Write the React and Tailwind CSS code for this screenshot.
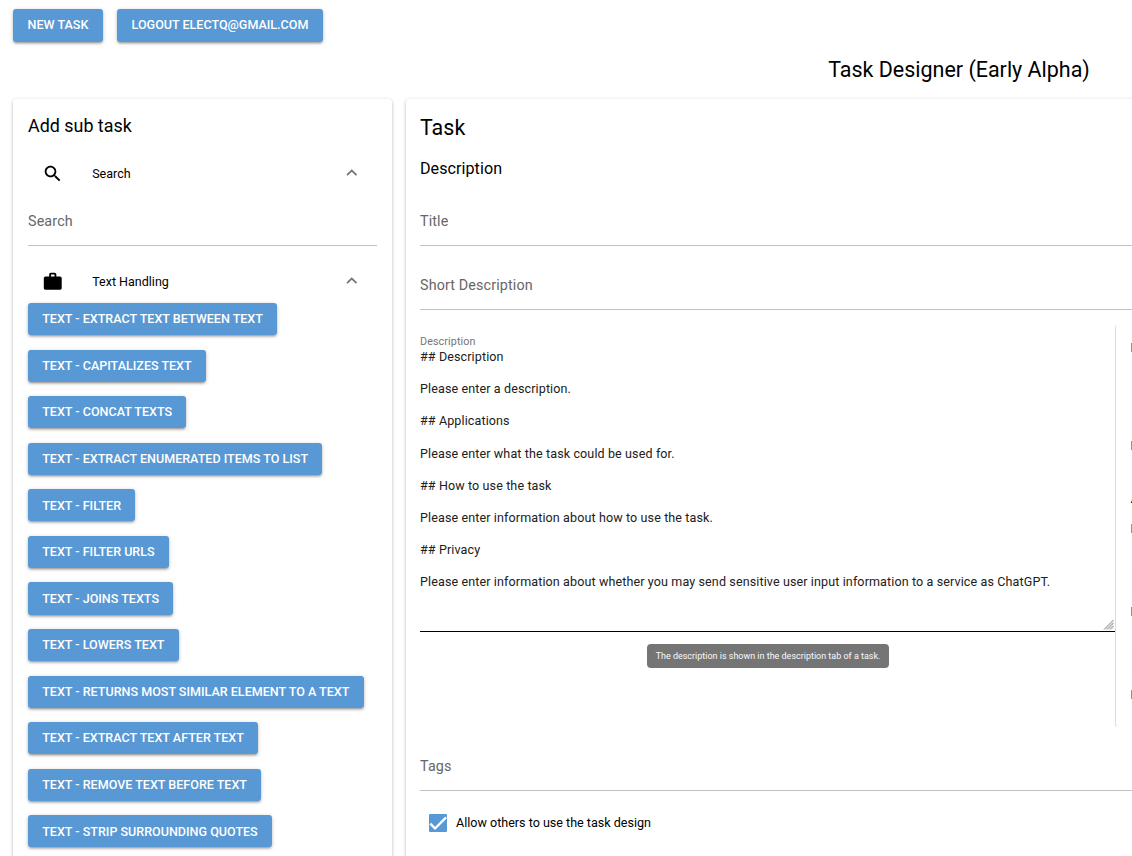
const SUB_TASKS = [
  'Text - Extract text between text',
  'Text - Capitalizes text',
  'Text - Concat texts',
  'Text - Extract enumerated items to list',
  'Text - Filter',
  'Text - Filter URLs',
  'Text - Joins texts',
  'Text - Lowers text',
  'Text - Returns most similar element to a text',
  'Text - Extract text after text',
  'Text - Remove text before text',
  'Text - Strip surrounding quotes',
];

const DESCRIPTION = `## Description

Please enter a description.

## Applications

Please enter what the task could be used for.

## How to use the task

Please enter information about how to use the task.

## Privacy

Please enter information about whether you may send sensitive user input information to a service as ChatGPT.`;

const PREVIEW = [
  ['Applications', 'Please enter what the task could be used for.'],
  ['How to use the task', 'Please enter information about how to use the task.'],
  ['Privacy', 'Please enter information about whether you may send sensitive user input.'],
];

function Button({ className = 'h-[32.22px]', children }) {
  return (
    <button
      className={`shrink-0 whitespace-nowrap rounded-[3px] bg-[#5898d4] px-[14.2px] text-[12.56px] font-medium uppercase leading-[21.6px] text-white shadow-[0_1px_4px_rgba(0,0,0,0.2),0_2px_2px_rgba(0,0,0,0.14),0_3px_1px_-2px_rgba(0,0,0,0.12)] ${className}`}
    >
      {children}
    </button>
  );
}

function Card({ className, children }) {
  return (
    <section
      className={`rounded-[4px] bg-white shadow-[0_1px_4px_rgba(0,0,0,0.2),0_2px_2px_rgba(0,0,0,0.14),0_3px_1px_-2px_rgba(0,0,0,0.12)] ${className}`}
    >
      {children}
    </section>
  );
}

function ExpansionHeader({ className, path, label }) {
  return (
    <div className={`flex items-center pl-[14.4px] pr-[15px] ${className}`}>
      <svg viewBox="0 0 24 24" className="h-[21.5px] w-[21.5px] fill-black">
        <path d={path} />
      </svg>
      <span className="ml-[28.3px] flex-1 pt-[1.2px] text-[12.53px]">{label}</span>
      <svg viewBox="0 0 24 24" className="mb-[2px] h-[21.5px] w-[21.5px] fill-[#757575]">
        <path d="M12 8l-6 6 1.41 1.41L12 10.83l4.59 4.58L18 14z" />
      </svg>
    </div>
  );
}

function Field({ label }) {
  return (
    <div className="flex h-[50px] items-center border-b border-[#c2c2c2] pt-[2px] text-[14.32px] tracking-[0.00937em] text-[#666]">
      {label}
    </div>
  );
}

export default function App() {
  return (
    <div className="h-[856px] w-full overflow-hidden bg-white font-[Roboto,sans-serif] text-black">
      <div className="flex w-[1918px] flex-col px-[13px] pt-[9px]">
        <div className="flex h-[33px] gap-[14px]">
          <Button className="h-[33px] w-[90px] pb-[2px]">New Task</Button>
          <Button className="h-[33px] w-[206px] pb-[2px]">Logout electq@gmail.com</Button>
        </div>
        <h1 className="mt-[13px] h-[30px] text-center text-[21.48px] leading-[30px]">Task Designer (Early Alpha)</h1>

        <div className="mt-[14px] flex gap-[14px]">
          <Card className="h-[900px] w-[379px] shrink-0 px-[15px] pt-[14px]">
            <h2 className="h-[26px] text-[17.9px] leading-[26px]">Add sub task</h2>
            <div className="mt-[13px]">
              <ExpansionHeader
                className="h-[44px]"
                label="Search"
                path="M15.5 14h-.79l-.28-.27C15.41 12.59 16 11.11 16 9.5 16 5.91 13.09 3 9.5 3S3 5.91 3 9.5 5.91 16 9.5 16c1.61 0 3.09-.59 4.23-1.57l.27.28v.79l5 4.99L20.49 19l-4.99-5zm-6 0C7.01 14 5 11.99 5 9.5S7.01 5 9.5 5 14 7.01 14 9.5 11.99 14 9.5 14z"
              />
            </div>
            <Field label="Search" />
            <div className="mt-[14px]">
              <ExpansionHeader
                className="h-[43px] pt-[0.6px]"
                label="Text Handling"
                path="M20 6h-4V4c0-1.11-.89-2-2-2h-4c-1.11 0-2 .89-2 2v2H4c-1.11 0-1.99.89-1.99 2L2 19c0 1.11.89 2 2 2h16c1.11 0 2-.89 2-2V8c0-1.11-.89-2-2-2zm-6 0h-4V4h4v2z"
              />
            </div>
            <div className="flex flex-col items-start gap-[14.35px]">
              {SUB_TASKS.map((task) => (
                <Button key={task}>{task}</Button>
              ))}
            </div>
          </Card>

          <Card className="h-[900px] flex-1 pl-[14px] pr-[14px] pt-[14px]">
            <h2 className="h-[30px] text-[21.48px] leading-[30px]">Task</h2>
            <h3 className="mt-[14px] h-[24px] text-[16.11px] leading-[24px] tracking-[0.003em]">Description</h3>
            <div className="mt-[15px] flex flex-col gap-[14px]">
              <Field label="Title" />
              <Field label="Short Description" />
            </div>

            <div className="mt-[15px] flex h-[402px]">
              <div className="relative w-[695px] shrink-0">
                <div className="flex h-[307px] flex-col border-b border-black pt-[9.1px]">
                  <label className="text-[10.74px] leading-[15px] tracking-[0.00937em] text-[#757575]">Description</label>
                  <p className="whitespace-pre-wrap text-[12.54px] leading-[16.09px] tracking-[0.00937em] text-[#212121]">
                    {DESCRIPTION}
                  </p>
                  <svg viewBox="0 0 12 12" className="mb-px mr-px mt-auto h-[12px] w-[12px] self-end" fill="none">
                    <path d="M2 11.5L11.5 2M5 11.5L11.5 5M8 11.5L11.5 8" stroke="#808080" />
                    <path d="M3.5 11.5L11.5 3.5M6.5 11.5L11.5 6.5M9.5 11.5L11.5 9.5" stroke="#d0d0d0" strokeWidth="0.7" />
                  </svg>
                </div>
                <div className="absolute left-[227px] top-[319px] flex h-[24px] w-[242px] items-center justify-center whitespace-nowrap rounded-[4px] bg-[#757575] pt-[1px] text-[8.97px] text-[#fafafa]">
                  The description is shown in the description tab of a task.
                </div>
              </div>
              <div className="flex flex-1 flex-col overflow-hidden rounded-l-[2px] border-l border-[#dcdcdc] pl-[14.4px] text-[12.53px] leading-[20px]">
                <p className="mt-[13px]">Description</p>
                <p className="mt-[78px]">Please enter a description.</p>
                {PREVIEW.map(([title, text]) => (
                  <div key={title} className="h-[83.1px] shrink-0 pt-[20.1px]">
                    <h4 className="h-[43px] text-[24px] leading-[39px]">{title}</h4>
                    <p>{text}</p>
                  </div>
                ))}
              </div>
            </div>

            <div className="mt-[14px]">
              <Field label="Tags" />
            </div>
            <label className="mt-[14px] flex h-[36px] items-center pl-[9px] text-[12.55px]">
              <span className="flex h-[18px] w-[18px] items-center justify-center rounded-[1px] bg-[#5898d4]">
                <svg viewBox="0 0 24 24" className="h-[18px] w-[18px]">
                  <path d="M1.73,12.91 8.1,19.28 22.79,4.59" fill="none" stroke="white" strokeWidth="3.12" />
                </svg>
              </span>
              <span className="ml-[9px]">Allow others to use the task design</span>
            </label>
          </Card>
        </div>
      </div>
    </div>
  );
}
